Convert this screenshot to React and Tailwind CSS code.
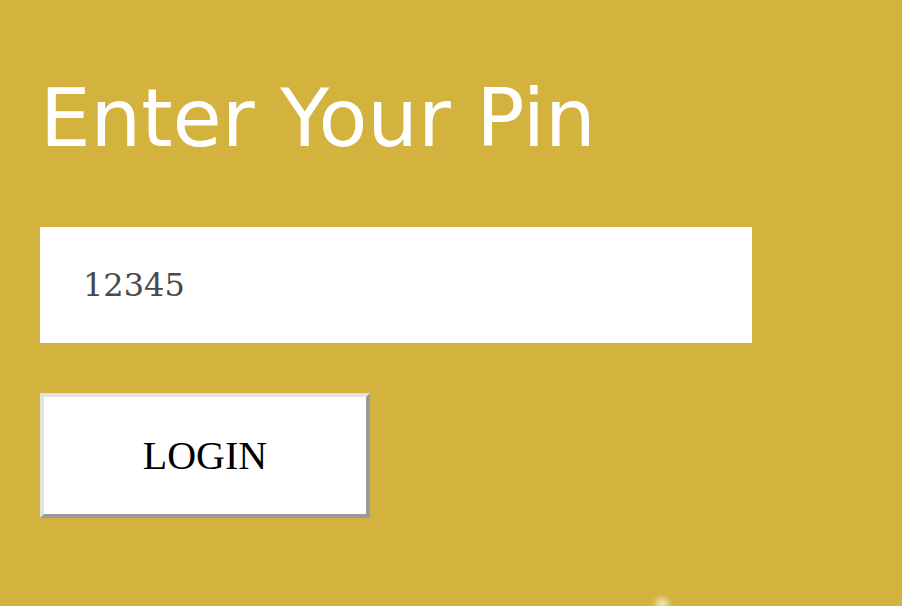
import React, { useState } from "react";

export default function App() {
  const [pin, setPin] = useState("12345");

  return (
    <div className="min-h-screen w-full bg-[#d3b23d] px-10 overflow-hidden relative">
      <h1 className="pt-[79px] font-['DejaVu_Sans',sans-serif] text-[80px] leading-none text-white">
        Enter Your Pin
      </h1>

      <input
        type="text"
        value={pin}
        onChange={(e) => setPin(e.target.value)}
        className="mt-[68px] block h-[116px] w-[712px] bg-white pl-[43px] font-['DejaVu_Serif',serif] text-[32px] text-[#4a4a4a] outline-none"
      />

      <button className="mt-[50px] block h-[125px] w-[330px] border-4 border-t-[#e3e3e3] border-l-[#e3e3e3] border-b-[#9a9a9a] border-r-[#9a9a9a] bg-white font-['Liberation_Serif',serif] text-[40px] text-black">
        LOGIN
      </button>

      {/* faint glow peeking at the bottom edge */}
      <div className="absolute left-[656px] top-[598px] h-[12px] w-[12px] rounded-full bg-white/70 blur-[3px]" />
    </div>
  );
}
